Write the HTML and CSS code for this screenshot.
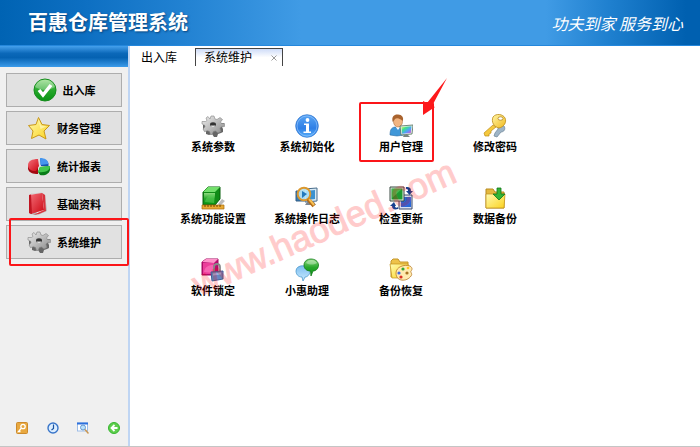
FILE: index.html
```html
<!DOCTYPE html>
<html lang="zh-CN">
<head>
    <meta charset="UTF-8">
    <meta name="viewport" content="width=device-width, initial-scale=1.0">
    <title>百惠仓库管理系统</title>
    <link rel="stylesheet" href="styles.css">
</head>
<body>
    <!-- Shared gradients and symbols -->
    <svg class="defs" width="0" height="0" aria-hidden="true">
        <defs>
            <linearGradient id="green" x1="0" y1="0" x2="0" y2="1"><stop offset="0" stop-color="#8edb80"/><stop offset=".5" stop-color="#28a82d"/><stop offset="1" stop-color="#079312"/></linearGradient>
            <linearGradient id="blue" x1="0" y1="0" x2="0" y2="1"><stop offset="0" stop-color="#5aa6f4"/><stop offset=".6" stop-color="#2f7fe6"/><stop offset="1" stop-color="#58b0fa"/></linearGradient>
            <linearGradient id="sky" x1="0" y1="0" x2="0" y2="1"><stop offset="0" stop-color="#7cbdf0"/><stop offset="1" stop-color="#c9ebff"/></linearGradient>
            <linearGradient id="gold" x1="0" y1="0" x2="1" y2="1"><stop offset="0" stop-color="#fff6a8"/><stop offset="1" stop-color="#f1b91c"/></linearGradient>
            <linearGradient id="yellow" x1="0" y1="0" x2="1" y2="1"><stop offset="0" stop-color="#fffbb0"/><stop offset="1" stop-color="#fbd21e"/></linearGradient>
            <linearGradient id="grey" x1="0" y1="0" x2="1" y2="1"><stop offset="0" stop-color="#eeeeee"/><stop offset="1" stop-color="#888888"/></linearGradient>
            <linearGradient id="red" x1="0" y1="0" x2="1" y2="1"><stop offset="0" stop-color="#f4707a"/><stop offset="1" stop-color="#cc0713"/></linearGradient>
            <linearGradient id="rainbow" x1="0" y1="0" x2="1" y2="1"><stop offset="0" stop-color="#f6fb62"/><stop offset=".3" stop-color="#3fe08c"/><stop offset=".6" stop-color="#4ea2fa"/><stop offset="1" stop-color="#f33fd0"/></linearGradient>
        </defs>
        <symbol id="gear" viewBox="0 0 24 24">
            <path fill="#666" d="M2 11v4l3 2v3l3 1 3-1 2 3h3l1-3 3-1 2-1v-3l-1-2 2-2v-2z"/>
            <path fill="url(#grey)" stroke="#858585" stroke-width=".6" d="M9 5l1-3h3l1 3 2 .5 3-2 2.500 2-2 2.500 1 1.500h3v3l-3.500.5-1 1.500 1 3-3 1.500-2.500-2-2 .5-1.500 3H9.500l-1-3-2-.8-3 1L2 15l2-2.300-.5-1.700L1 10V7.500h3.500l1.500-1L5 4l2-1.500z"/>
            <ellipse cx="12" cy="10.500" rx="3" ry="2.200" fill="#333"/><path d="M9.500 11.500c1 2 4 2 5 0" fill="#ddd"/>
        </symbol>
    </svg>

    <header class="header">
        <h1 class="title">百惠仓库管理系统</h1>
        <p class="slogan">功夫到家 服务到心</p>
    </header>

    <div class="layout">
        <aside class="sidebar">
            <div class="sidebar-bar"></div>
            <nav class="menu">
                <button class="menu-button">
                    <svg class="icon" viewBox="0 0 24 24"><circle cx="12" cy="12" r="11" fill="url(#green)" stroke="#168d1e"/><path d="M2 9a10.500 10.500 0 0 1 20 0c-7 4-13 4-20 0z" fill="#fff" opacity=".3"/><path d="M6 12l4 5 8-10" fill="none" stroke="#fff" stroke-width="3.500"/></svg>
                    出入库
                </button>
                <button class="menu-button">
                    <svg class="icon" viewBox="0 0 24 24"><path d="M11.500 1.500l3.500 7 7.500 1-5.500 5.500 2 8-7-4-7.500 3.500L6 15 1.500 9.500 9 8.500z" fill="url(#yellow)" stroke="#c9981a" stroke-linejoin="round"/><path d="M11.500 4l2.500 5.500 5.500 1-6 2.500z" fill="#fffbd0" opacity=".6"/></svg>
                    财务管理
                </button>
                <button class="menu-button">
                    <svg class="icon" viewBox="0 0 24 24"><path d="M1 11v4c1 4 5 5 10 5v-7z" fill="#a30810"/><path d="M1 11c0-4 4-6 10-6l1 7-3 5c-5 0-8-2-8-6z" fill="url(#red)"/><path d="M13 5c4 0 8 1 8.500 5v2L14 12z" fill="#1554ae"/><path d="M13 4c5 0 8 2 8.500 6l-8 1z" fill="#4696ed"/><path d="M11 18l2-5 10-1v4c-1 4-5 6-10 5z" fill="#087c18"/><path d="M11 18l2-5 10-1c0 4-4 7-12 6z" fill="#43c84d"/></svg>
                    统计报表
                </button>
                <button class="menu-button">
                    <svg class="icon" viewBox="0 0 24 24"><path d="M18 3l2 16-10 4-7-1z" fill="#b7b7b7"/><path d="M4 2l11-1 3 2 1 16-9 4z" fill="#f5f5f5" stroke="#bbb" stroke-width=".5"/><path d="M2 3l13-2 2 17-13 4-2-1z" fill="url(#red)"/><path d="M2 3l2-.5L5 22l-3-1z" fill="#c01522"/><path d="M15 1l3 2 1 16-7 3-6 1 11-5z" fill="#d8323c"/></svg>
                    基础资料
                </button>
                <button class="menu-button">
                    <svg class="icon"><use href="#gear"/></svg>
                    系统维护
                    <span class="mark mark-menu"></span>
                </button>
            </nav>
            <div class="tools">
                <button class="tool" aria-label="密码"><svg viewBox="0 0 12 12"><rect x=".5" y=".5" width="11" height="11" rx="1" fill="#e8a83f" stroke="#cc8a2c"/><circle cx="7" cy="4.500" r="2.200" fill="none" stroke="#fff" stroke-width="1.300"/><path d="M5.500 6L2.500 9.500h2" fill="none" stroke="#fff" stroke-width="1.300"/></svg></button>
                <button class="tool" aria-label="时间"><svg viewBox="0 0 12 12"><circle cx="6" cy="6" r="5" fill="#dceeff" stroke="#3975c9" stroke-width="1.400"/><path d="M6.500 2.500V6.500L4.500 8" fill="none" stroke="#17509f" stroke-width="1.200"/></svg></button>
                <button class="tool" aria-label="查找"><svg viewBox="0 0 12 12"><rect x=".5" y="1" width="10" height="8" fill="#fff" stroke="#9dbde8"/><path d="M0 .5h11v2H0z" fill="#2c70dd"/><circle cx="6" cy="5.500" r="2.500" fill="#b9e1fb" stroke="#6799d0"/><path d="M8 7.500l3.500 4" stroke="#c99752" stroke-width="1.500"/></svg></button>
                <button class="tool" aria-label="退出"><svg viewBox="0 0 12 12"><circle cx="6" cy="6" r="5.500" fill="#5fce4d" stroke="#35b52f"/><path d="M9.500 6H4M6.500 3L3.500 6l3 3" fill="none" stroke="#fff" stroke-width="1.800"/></svg></button>
            </div>
        </aside>

        <main class="main">
            <div class="tabs">
                <button class="tab">出入库</button>
                <div class="tab-active">
                    <button class="tab-label">系统维护</button>
                    <button class="tab-close" aria-label="关闭"><svg viewBox="0 0 6 6"><path d="M.5.5l5 5M5.500.5l-5 5" stroke="#999"/></svg></button>
                </div>
            </div>

            <div class="items">
                <button class="item">
                    <svg class="icon"><use href="#gear"/></svg>
                    系统参数
                </button>
                <button class="item">
                    <svg class="icon" viewBox="0 0 24 24"><circle cx="12" cy="12" r="11.300" fill="url(#blue)" stroke="#2a70cc" stroke-width=".7"/><circle cx="12" cy="12" r="10" fill="none" stroke="#9bcaff" opacity=".6"/><circle cx="12.500" cy="6" r="1.900" fill="#fff"/><path d="M9 9.500h5v8h2V19H8.500v-1.500H11V11H9z" fill="#fff"/></svg>
                    系统初始化
                </button>
                <button class="item">
                    <svg class="icon" viewBox="0 0 24 24"><path d="M1 21c0-6 2-8 6-8h4c3 0 4 3 4 8l-7 1z" fill="#4097d8" stroke="#246aa4" stroke-width=".6"/><path d="M6 12l3 4 3-4z" fill="#fff"/><ellipse cx="9" cy="7.500" rx="4.500" ry="5.500" fill="#f2b582" stroke="#a06030" stroke-width=".5"/><path d="M3.800 8C2 2 6 0 9 .5c4 0 6 3 4.800 6.500C12 5 8 3 6 5z" fill="#a9632e"/><path d="M11 12l13-1-1 9-11 1z" fill="#e8eee9" stroke="#50705c" stroke-width=".8"/><path d="M12.500 13l10-.7-.7 6.700-8.800.8z" fill="url(#rainbow)"/><path d="M15 21h4l2 2h-7z" fill="#798481"/></svg>
                    用户管理
                    <span class="mark mark-item"></span>
                    <svg class="arrow" viewBox="0 0 28 40"><path d="M27 1L12 29l3 1L3 38V24l4 2z" fill="#fd191b"/></svg>
                </button>
                <button class="item">
                    <svg class="icon" viewBox="0 0 24 24"><path d="M15 9l6 3c2 3 0 6-3 6l-4 5-3-1 1-3 3-4z" fill="#9eb4c6" stroke="#6d8496" stroke-width=".7"/><path d="M10 11L1 19l1 3h4v-2l2-1v-2l5-4z" fill="#f5c83d" stroke="#bb8c19" stroke-width=".7"/><path d="M10 3c3-4 10-3 12 1s-1 9-6 10c-5-1-8-6-6-11z" fill="url(#gold)" stroke="#bc8c16" stroke-width=".8"/><ellipse cx="17.500" cy="4.500" rx="2.500" ry="1.700" fill="#fff" stroke="#a57a18" stroke-width=".7"/></svg>
                    修改密码
                </button>
                <button class="item">
                    <svg class="icon" viewBox="0 0 24 24"><path d="M17 18l4-5 3 2-5 5z" fill="#bbb"/><path d="M2 6l5-5h12v12l-5 6H2z" fill="#108c17" stroke="#08610d"/><path d="M2 6l5-5h12l-5 5z" fill="#73df6c"/><path d="M3 7h11v11H3z" fill="url(#green)"/><path d="M4 16c1-5 4-7 9-8v9z" fill="#61d45d" opacity=".5"/><path d="M1 19h22v4H1z" fill="#e9a932" stroke="#a66b0b" stroke-width=".7"/><path d="M4 19v2m3-2v2m3-2v2m3-2v2m3-2v2m3-2v2" stroke="#704500"/></svg>
                    系统功能设置
                </button>
                <button class="item">
                    <svg class="icon" viewBox="0 0 24 24"><path d="M1 5h8v10H1z" fill="#347db8" stroke="#345d82"/><path d="M9 3l13-1v13l-12 1z" fill="#d7e9f5" stroke="#486c8b"/><path d="M11 5l9-1v9l-9 1z" fill="#3b92d0"/><path d="M12 16h7l2 3H10z" fill="#7d8792"/><circle cx="9" cy="8" r="6.300" fill="#b8e5fa" fill-opacity=".9" stroke="#db982f" stroke-width="2"/><path d="M7 5l5 3-5 4z" fill="#2379bd"/><path d="M13 13l6 7" stroke="#b56c16" stroke-width="4"/><path d="M14 13l5 6" stroke="#f7bf53" stroke-width="2"/></svg>
                    系统操作日志
                </button>
                <button class="item">
                    <svg class="icon" viewBox="0 0 24 24"><path d="M10 9h13v14H10z" fill="#d7e0f2" stroke="#3c4b6b"/><path d="M12 11h10v10H12z" fill="#2867d7"/><path d="M1 1h14v14H1z" fill="#e1ece2" stroke="#3b4b42"/><path d="M2.500 2.500h11v11h-11z" fill="#1d9a32"/><path d="M3 3h10L3 12z" fill="#42b74d"/><path d="M17 1c4 0 5 1 5 4h2l-3.500 4L17 5h2c0-2-1-2-2-2zM2 19l3-3 2 4H6c0 2 2 2 3 1v2c-4 1-6 0-6-3H1z" fill="#17418f"/></svg>
                    检查更新
                </button>
                <button class="item">
                    <svg class="icon" viewBox="0 0 24 24"><path d="M3 3h7l2 3h9v16H3z" fill="#e4b83e" stroke="#b78a20"/><path d="M3 8h19l-1 14H3z" fill="url(#yellow)" stroke="#be8e17" stroke-width=".7"/><path d="M14 2h4v6h4l-6 6-6-6h4z" fill="#33b536" stroke="#12761b" stroke-width=".8"/></svg>
                    数据备份
                </button>
                <button class="item">
                    <svg class="icon" viewBox="0 0 24 24"><path d="M1 4l4-3h12v12l-4 4H1z" fill="#b90c70" stroke="#a00b60"/><path d="M1 4l4-3h12l-4 4z" fill="#ff93ca"/><path d="M2 5h11v11H2z" fill="#ec3e9b"/><path d="M3 14c1-5 4-7 9-7v8z" fill="#ff7dbf" opacity=".6"/><path d="M13 14V9c0-4 6-4 6 0v5" fill="none" stroke="#888" stroke-width="1.800"/><path d="M10 14l12-1v8l-11 2z" fill="#6488c2" stroke="#405f95"/><path d="M12 15.500l8-1v2l-8 1z" fill="#96b4df"/></svg>
                    软件锁定
                </button>
                <button class="item">
                    <svg class="icon" viewBox="0 0 24 24"><path d="M1 13c0-7 13-7 14 0 0 4-3 6-5 6l-2 4-1-4c-4 0-6-3-6-6z" fill="url(#sky)" stroke="#4c99cc" stroke-width=".8"/><path d="M9 7c0-8 14-8 14.500 0 0 4-3 6-5.500 6l-2 5-.5-5C12 13 9 11 9 7z" fill="url(#green)" stroke="#127b1b" stroke-width=".8"/><path d="M11 5c2-4 9-4 11 0-4 2-7 2-11 0z" fill="#fff" opacity=".35"/></svg>
                    小惠助理
                </button>
                <button class="item">
                    <svg class="icon" viewBox="0 0 24 24"><path d="M2 3l2-2h5l2 3h8v15H2z" fill="#eec24a" stroke="#c4962a"/><path d="M1 6h18l-1 14H3z" fill="url(#yellow)" stroke="#c29119" stroke-width=".7"/><path d="M7 15c0-6 8-9 14-7 3 2 2 4 1 5s2 3 0 5c-4 6-15 6-15-3z" fill="#ffebb0" stroke="#b97b27" stroke-width=".8"/><circle cx="10" cy="15" r="1.600" fill="#4268dd"/><circle cx="14" cy="11" r="1.600" fill="#35a735"/><circle cx="12" cy="19" r="1.600" fill="#dc3025"/><circle cx="18" cy="15" r="1.600" fill="#a97321"/><circle cx="19" cy="10" r="1.300" fill="#ffc522"/></svg>
                    备份恢复
                </button>
            </div>
            <div class="watermark">www.haoded.com</div>
        </main>
    </div>
</body>
</html>
```

FILE: styles.css
```css
* {
    box-sizing: border-box;
}
body {
    margin: 0;
    min-height: 100vh;
    display: flex;
    flex-direction: column;
    font-family: "Liberation Sans", "Noto Sans CJK SC", sans-serif;
    font-size: 12px;
    color: #000;
    background-color: #fff;
    overflow: hidden;
}
button {
    padding: 0;
    border: none;
    background: none;
    font: inherit;
    color: inherit;
    cursor: pointer;
}
svg {
    display: block;
}
.defs {
    position: absolute;
}
.header {
    display: flex;
    align-items: center;
    justify-content: space-between;
    height: 46px;
    padding: 0 17px 0 28px;
    color: #fff;
    background: linear-gradient(to right, #0063b3 0%, #0d6fc2 12%, #2383d3 27%, #409be5 43%, #409be5 78%, #1f80cf 87%, #0060b0 98%);
    border-bottom: 1px solid #2487dc;
}
.title {
    margin: 0;
    font-size: 20px;
    line-height: 24px;
    text-shadow: 1px 1px 2px #07437c;
}
.slogan {
    margin: 0;
    font-family: "Noto Sans CJK SC", sans-serif;
    font-size: 16px;
    font-style: italic;
    line-height: 24px;
}
.layout {
    display: flex;
    flex: 1;
    border-bottom: 1px solid #c5c5c5;
}
.sidebar {
    display: flex;
    flex-direction: column;
    width: 130px;
    background-color: #f0f0f0;
    border-right: 2px solid #bfd5f3;
}
.sidebar-bar {
    height: 21px;
    background: linear-gradient(#45a0ec, #0b68b9 35%, #0562b2 55%, #3b9bea);
}
.menu {
    display: flex;
    flex-direction: column;
    gap: 4px;
    padding: 6px;
}
.menu-button {
    position: relative;
    display: flex;
    align-items: center;
    justify-content: center;
    gap: 6px;
    height: 34px;
    border: 1px solid #adadad;
    background-color: #e1e1e1;
    font-size: 11px;
    font-weight: bold;
}
.icon {
    width: 24px;
    height: 24px;
}
.tools {
    display: flex;
    justify-content: space-between;
    margin-top: auto;
    padding: 0 8px 12px 16px;
}
.tool {
    width: 12px;
    height: 12px;
}
.main {
    position: relative;
    flex: 1;
}
.tabs {
    display: flex;
    gap: 18px;
    height: 20px;
    padding: 2px 0 0 11px;
}
.tab {
    width: 36px;
    line-height: 20px;
}
.tab-active {
    display: flex;
    align-items: center;
    justify-content: space-between;
    width: 88px;
    padding: 0 5px 0 8px;
    border: 1px solid #444;
    border-bottom: none;
    background: linear-gradient(#cfdcf8, #fff 50%);
}
.tab-label {
    line-height: 20px;
}
.tab-close {
    width: 6px;
    height: 6px;
}
.items {
    display: grid;
    grid-template-columns: repeat(4, 94px);
    row-gap: 30px;
    padding: 48px 0 0 36px;
}
.item {
    position: relative;
    display: flex;
    flex-direction: column;
    align-items: center;
    font-size: 11px;
    font-weight: bold;
    line-height: 18px;
}

/* Red marks over the highlighted entries */
.mark {
    position: absolute;
    border: 2px solid #fb1519;
    border-radius: 2px;
}
.mark-menu {
    top: -8px;
    right: -8px;
    bottom: -8px;
    left: 2px;
}
.mark-item {
    top: -12px;
    right: 14px;
    bottom: -6px;
    left: 5px;
}
.arrow {
    position: absolute;
    top: -37px;
    left: 66px;
    width: 28px;
    height: 40px;
}
.watermark {
    position: absolute;
    top: 162px;
    left: 52px;
    font-size: 36px;
    line-height: 40px;
    color: #f00;
    -webkit-text-stroke: 1px #f00;
    opacity: 0.2;
    transform: rotate(-24deg);
    pointer-events: none;
}
```
